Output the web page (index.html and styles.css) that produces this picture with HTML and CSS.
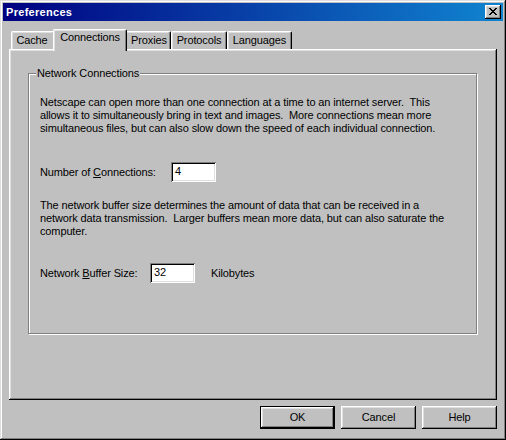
FILE: index.html
```html
<!DOCTYPE html>
<html>
<head>
<meta charset="utf-8">
<title>Preferences</title>
<link rel="stylesheet" href="styles.css">
</head>
<body>
<div class="window">
  <div class="titlebar">
    <span class="title">Preferences</span>
    <div class="close">
      <svg width="8" height="7" viewBox="0 0 8 7"><path d="M0 0h2v1h1v1h2v-1h1v-1h2v1h-1v1h-1v1h-1v1h1v1h1v1h1v1h-2v-1h-1v-1h-2v1h-1v1h-2v-1h1v-1h1v-1h1v-1h-1v-1h-1v-1h-1z" fill="#000"/></svg>
    </div>
  </div>
  <div class="content">
    <div class="tabs">
      <div class="tab tab-cache">Cache</div>
      <div class="tab tab-conn active">Connections</div>
      <div class="tab tab-proxies">Proxies</div>
      <div class="tab tab-protocols">Protocols</div>
      <div class="tab tab-languages">Languages</div>
    </div>
    <div class="panel">
      <fieldset class="group">
        <legend>Network Connections</legend>
        <div class="group-body">
          <p class="para">Netscape can open more than one connection at a time to an internet server.&nbsp; This<br>allows it to simultaneously bring in text and images.&nbsp; More connections mean more<br>simultaneous files, but can also slow down the speed of each individual connection.</p>
          <div class="row row-conn">
            <span class="label label-conn">Number of <u>C</u>onnections:</span>
            <div class="field">4</div>
          </div>
          <p class="para para2">The network buffer size determines the amount of data that can be received in a<br>network data transmission.&nbsp; Larger buffers mean more data, but can also saturate the<br>computer.</p>
          <div class="row row-buf">
            <span class="label label-buf">Network <u>B</u>uffer Size:</span>
            <div class="field">32</div>
            <span class="unit">Kilobytes</span>
          </div>
        </div>
      </fieldset>
    </div>
    <div class="buttons">
      <div class="btn default"><span>OK</span></div>
      <div class="btn"><span>Cancel</span></div>
      <div class="btn"><span>Help</span></div>
    </div>
  </div>
</div>
</body>
</html>
```
FILE: styles.css
```css
html, body {
  margin: 0;
  padding: 0;
  background: #c0c0c0;
}
body {
  font-family: "Liberation Sans", Arial, sans-serif;
  font-size: 11px;
  line-height: 13px;
  letter-spacing: -0.13px;
  color: #000;
}
.window {
  width: 506px;
  height: 440px;
  box-sizing: border-box;
  padding: 3px;
  background: #c0c0c0;
  box-shadow: inset -1px -1px 0 #000, inset 1px 1px 0 #dfdfdf,
              inset -2px -2px 0 #808080, inset 2px 2px 0 #fff;
  display: flex;
  flex-direction: column;
}
.titlebar {
  height: 18px;
  background: linear-gradient(90deg, #000080, #1084d0);
  display: flex;
  align-items: center;
  justify-content: space-between;
  padding: 0 2px 0 3px;
}
.title {
  color: #fff;
  font-weight: bold;
  font-size: 11px;
  letter-spacing: 0.3px;
}
.close {
  width: 16px;
  height: 14px;
  box-sizing: border-box;
  background: #c0c0c0;
  box-shadow: inset -1px -1px 0 #000, inset 1px 1px 0 #fff,
              inset -2px -2px 0 #808080, inset 2px 2px 0 #dfdfdf;
  display: flex;
  align-items: center;
  justify-content: center;
  padding: 0 1px 1px 0;
}
.close svg { display: block; }
.content {
  padding: 8px 6px 0 6px;
  display: flex;
  flex-direction: column;
}
.tabs {
  display: flex;
  align-items: flex-end;
  height: 20px;
  padding-left: 2px;
  position: relative;
  z-index: 1;
}
.tab {
  height: 18px;
  box-sizing: border-box;
  padding-top: 2px;
  text-align: center;
  border-top: 1px solid #fff;
  border-left: 1px solid #fff;
  border-right: 1px solid #000;
  border-top-left-radius: 2px;
  border-top-right-radius: 2px;
  box-shadow: inset -1px 0 0 #808080, inset 1px 1px 0 #dfdfdf;
  background: #c0c0c0;
}
.tab-cache { width: 44px; padding-right: 2px; }
.tab-conn { width: 74px; }
.tab-proxies { width: 46px; padding-left: 2px; }
.tab-protocols { width: 56px; }
.tab-languages { width: 65px; }
.tab.active {
  height: 22px;
  margin: 0 -2px -2px -2px;
  padding-top: 1px;
  position: relative;
  z-index: 2;
}
.panel {
  height: 351px;
  box-sizing: border-box;
  padding: 18px 20px 0 19px;
  box-shadow: inset -1px -1px 0 #000, inset 1px 1px 0 #fff,
              inset -2px -2px 0 #808080, inset 2px 2px 0 #dfdfdf;
}
.group {
  margin: 0;
  padding: 0;
  border: 1px solid #808080;
  box-shadow: 1px 1px 0 #fff, inset 1px 1px 0 #fff;
  min-width: 0;
}
.group legend {
  margin-left: 7px;
  padding: 0 1px;
  background: #c0c0c0;
}
.group-body {
  height: 237px;
  padding: 16px 0 0 11px;
}
.para {
  margin: 0;
  white-space: nowrap;
}
.row {
  display: flex;
  align-items: center;
}
.row-conn { margin-top: 27px; }
.para2 { margin-top: 17px; }
.row-buf { margin-top: 25px; }
.label-conn { width: 131px; }
.label-buf { width: 110px; }
.field {
  width: 45px;
  height: 20px;
  box-sizing: border-box;
  background: #fff;
  padding: 3px 0 0 4px;
  box-shadow: inset 1px 1px 0 #808080, inset -1px -1px 0 #fff,
              inset 2px 2px 0 #000, inset -2px -2px 0 #dfdfdf;
}
.unit { margin-left: 16px; }
.buttons {
  display: flex;
  justify-content: flex-end;
  gap: 6px;
  margin-top: 6px;
}
.btn {
  width: 75px;
  height: 23px;
  box-sizing: border-box;
  display: flex;
  align-items: center;
  justify-content: center;
  box-shadow: inset -1px -1px 0 #000, inset 1px 1px 0 #fff,
              inset -2px -2px 0 #808080, inset 2px 2px 0 #dfdfdf;
}
.btn.default {
  box-shadow: inset 0 0 0 1px #000, inset -2px -2px 0 #000, inset 2px 2px 0 #fff,
              inset -3px -3px 0 #808080, inset 3px 3px 0 #dfdfdf;
}
```
